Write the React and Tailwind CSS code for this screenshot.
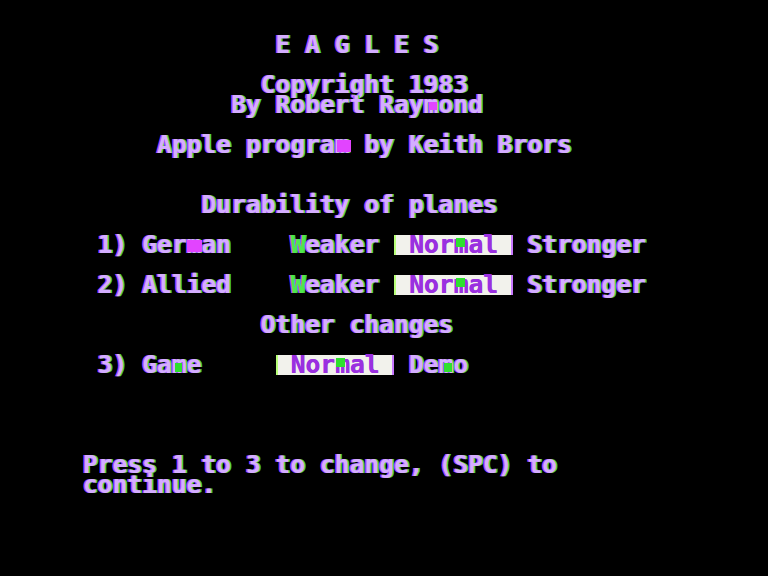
import React from "react";

const TXT =
  "text-[#d4aeff] [text-shadow:-1.5px_0_0_#b048ff,1.5px_0_0_#44d444]";

function Row({ children }) {
  return <div className={"flex h-5 whitespace-pre " + TXT}>{children}</div>;
}

function Inv({ children }) {
  return (
    <span className="whitespace-pre bg-[#f2f2ec] text-[#9a30e0] [text-shadow:0.5px_0_0_#9a30e0] shadow-[inset_2px_0_0_#b8ff78,inset_-2px_0_0_#c878ff]">
      {children}
    </span>
  );
}

function M({ color, box }) {
  return (
    <span className="relative">
      m
      <span
        aria-hidden="true"
        className="absolute"
        style={{ background: color, ...box }}
      />
    </span>
  );
}

const MAG = "#e244ff";
const GRN = "#2ee02e";

export default function App() {
  return (
    <div className="w-[768px] h-[576px] bg-black overflow-hidden pt-[35px] pl-[83px] font-['DejaVu_Sans_Mono',monospace] font-bold text-[24.62px] leading-[20px]">
      <Row>{"             E A G L E S"}</Row>
      <Row>{""}</Row>
      <Row>{"            Copyright 1983"}</Row>
      <Row>
        {"          By Robert Ray"}
        <M color={MAG} box={{ left: 5, width: 8, top: 7, height: 8 }} />
        {"ond"}
      </Row>
      <Row>{""}</Row>
      <Row>
        {"     Apple progra"}
        <M color={MAG} box={{ left: 2, width: 14, top: 5, height: 12 }} />
        {" by Keith Brors"}
      </Row>
      <Row>{""}</Row>
      <Row>{""}</Row>
      <Row>{"        Durability of planes"}</Row>
      <Row>{""}</Row>
      <Row>
        {" 1) Ger"}
        <M color={MAG} box={{ left: 0, width: 15, top: 5, height: 12 }} />
        {"an    "}
        <span className="text-[#4ee84e]">W</span>
        {"eaker "}
        <Inv>
          {" Nor"}
          <M color={GRN} box={{ left: 3, width: 9, top: 8, height: 9 }} />
          {"al "}
        </Inv>
        {" Stronger"}
      </Row>
      <Row>{""}</Row>
      <Row>
        {" 2) Allied    "}
        <span className="text-[#4ee84e]">W</span>
        {"eaker "}
        <Inv>
          {" Nor"}
          <M color={GRN} box={{ left: 3, width: 9, top: 8, height: 9 }} />
          {"al "}
        </Inv>
        {" Stronger"}
      </Row>
      <Row>{""}</Row>
      <Row>{"            Other changes"}</Row>
      <Row>{""}</Row>
      <Row>
        {" 3) Ga"}
        <M color={GRN} box={{ left: 3, width: 7, top: 8, height: 9 }} />
        {"e     "}
        <Inv>
          {" Nor"}
          <M color={GRN} box={{ left: 1, width: 9, top: 8, height: 9 }} />
          {"al "}
        </Inv>
        {" De"}
        <M color={GRN} box={{ left: 5, width: 8, top: 8, height: 9 }} />
        {"o"}
      </Row>
      <Row>{""}</Row>
      <Row>{""}</Row>
      <Row>{""}</Row>
      <Row>{""}</Row>
      <Row>{"Press 1 to 3 to change, (SPC) to"}</Row>
      <Row>{"continue."}</Row>
    </div>
  );
}
